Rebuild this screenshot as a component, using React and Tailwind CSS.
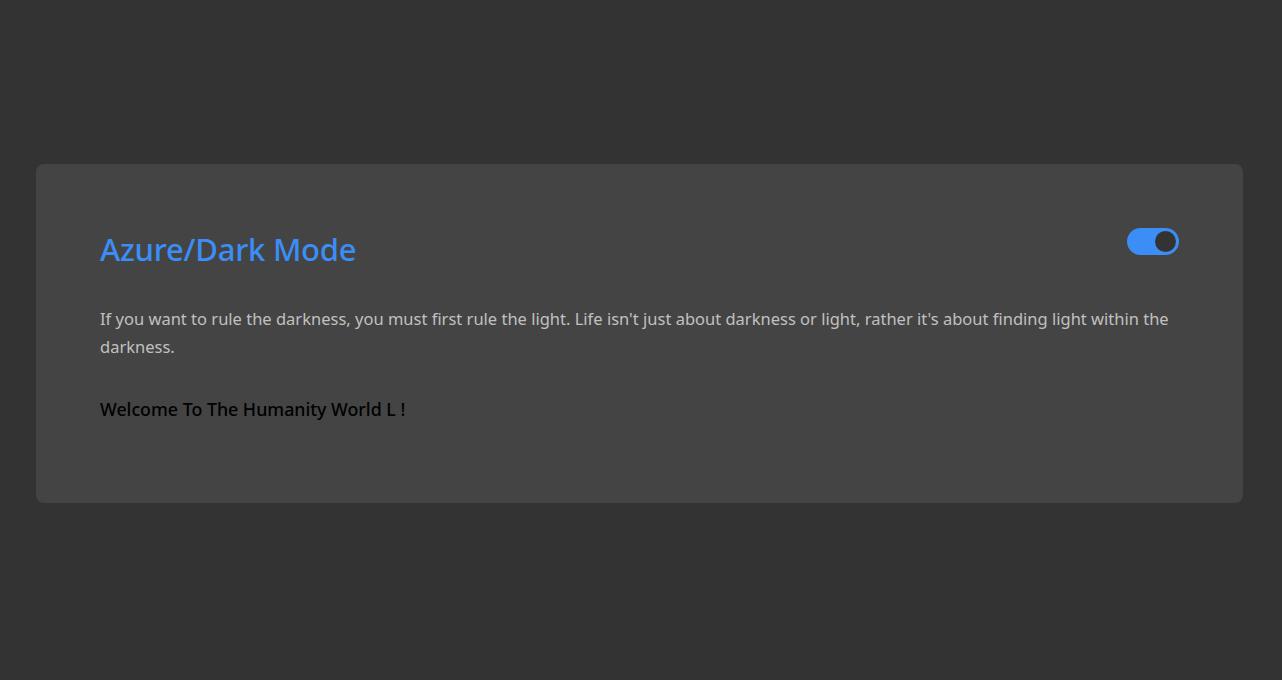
export default function App() {
  return (
    <div className="min-h-screen bg-[#333333] pt-[164px] pl-9 pr-[39px] font-['Noto_Sans',sans-serif]">
      <div className="w-full bg-[#444444] rounded-lg p-16 pb-[62px]">
        <div className="flex items-start justify-between mb-[35px]">
          <h2 className="text-[31px] leading-[42px] font-medium text-[#3a8ef6] tracking-[-0.25px]">Azure/Dark Mode</h2>
          <button className="w-[52px] h-[27px] rounded-full bg-[#3a8ef6] flex items-center justify-end px-[3px]">
            <span className="w-[21px] h-[21px] rounded-full bg-[#333333]" />
          </button>
        </div>
        <p className="text-[16.5px] leading-7 text-[#c0c0c0] mb-8">
          If you want to rule the darkness, you must first rule the light. Life isn't just about darkness or light, rather it's about finding light within the darkness.
        </p>
        <p className="text-[17.8px] leading-8 text-black font-medium mb-4">Welcome To The Humanity World L !</p>
      </div>
    </div>
  )
}
